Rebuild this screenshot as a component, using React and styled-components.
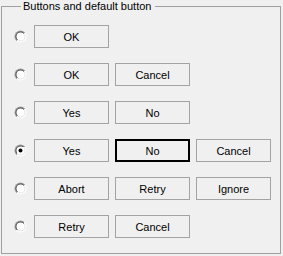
import React from "react";
import styled, { createGlobalStyle } from "styled-components";

const Global = createGlobalStyle`
  html, body { margin: 0; padding: 0; background: #f0f0f0; }
  body { font-family: "Liberation Sans", Arial, sans-serif; font-size: 11px; color: #000; }
`;

const Page = styled.div`
  width: 283px;
  height: 256px;
  background: #f0f0f0;
  padding-left: 1px;
  box-sizing: border-box;
`;

const Group = styled.fieldset`
  box-sizing: border-box;
  width: 280px;
  height: 254px;
  margin: 0;
  padding: 12px 0 0 12px;
  border: 1px solid #a0a0a0;
  min-width: 0;
`;

const Legend = styled.legend`
  margin-left: 7px;
  padding: 0 4px 0 2px;
  font-size: 11px;
  line-height: 13px;
  color: #000;
`;

const Rows = styled.div`
  display: flex;
  flex-direction: column;
  gap: 15px;
`;

const Row = styled.div`
  display: flex;
  align-items: center;
  height: 23px;
`;

const RadioBox = styled.span`
  width: 13px;
  height: 13px;
  margin-right: 7px;
  display: inline-block;
  flex: none;
`;

const Buttons = styled.div`
  display: flex;
  gap: 6px;
`;

const Button = styled.button`
  box-sizing: border-box;
  width: 75px;
  height: 23px;
  margin: 0;
  padding: 0;
  background: #f0f0f0;
  border: ${(p) => (p.$default ? "2px solid #000" : "1px solid #a3a3a3")};
  font-family: "Liberation Sans", Arial, sans-serif;
  font-size: 11px;
  color: #000;
  display: flex;
  align-items: center;
  justify-content: center;
`;

function Radio({ checked }) {
  return (
    <RadioBox>
      <svg width="13" height="13" viewBox="0 0 13 13">
        <defs>
          <linearGradient id="outer" x1="0" y1="0" x2="1" y2="1">
            <stop offset="0.5" stopColor="#a0a0a0" />
            <stop offset="0.5" stopColor="#ffffff" />
          </linearGradient>
          <linearGradient id="inner" x1="0" y1="0" x2="1" y2="1">
            <stop offset="0.5" stopColor="#505050" />
            <stop offset="0.5" stopColor="#e3e3e3" />
          </linearGradient>
        </defs>
        <circle cx="6.5" cy="6.5" r="6" fill="url(#outer)" />
        <circle cx="6.5" cy="6.5" r="5" fill="url(#inner)" />
        <circle cx="6.5" cy="6.5" r="4" fill="#ffffff" />
        {checked && <circle cx="6.5" cy="6.5" r="2" fill="#000" />}
      </svg>
    </RadioBox>
  );
}

const rows = [
  { buttons: ["OK"] },
  { buttons: ["OK", "Cancel"] },
  { buttons: ["Yes", "No"] },
  { buttons: ["Yes", "No", "Cancel"], checked: true, def: 1 },
  { buttons: ["Abort", "Retry", "Ignore"] },
  { buttons: ["Retry", "Cancel"] },
];

export default function App() {
  return (
    <Page>
      <Global />
      <Group>
        <Legend>Buttons and default button</Legend>
        <Rows>
          {rows.map((r, i) => (
            <Row key={i}>
              <Radio checked={r.checked} />
              <Buttons>
                {r.buttons.map((b, j) => (
                  <Button key={j} $default={r.def === j}>
                    {b}
                  </Button>
                ))}
              </Buttons>
            </Row>
          ))}
        </Rows>
      </Group>
    </Page>
  );
}
